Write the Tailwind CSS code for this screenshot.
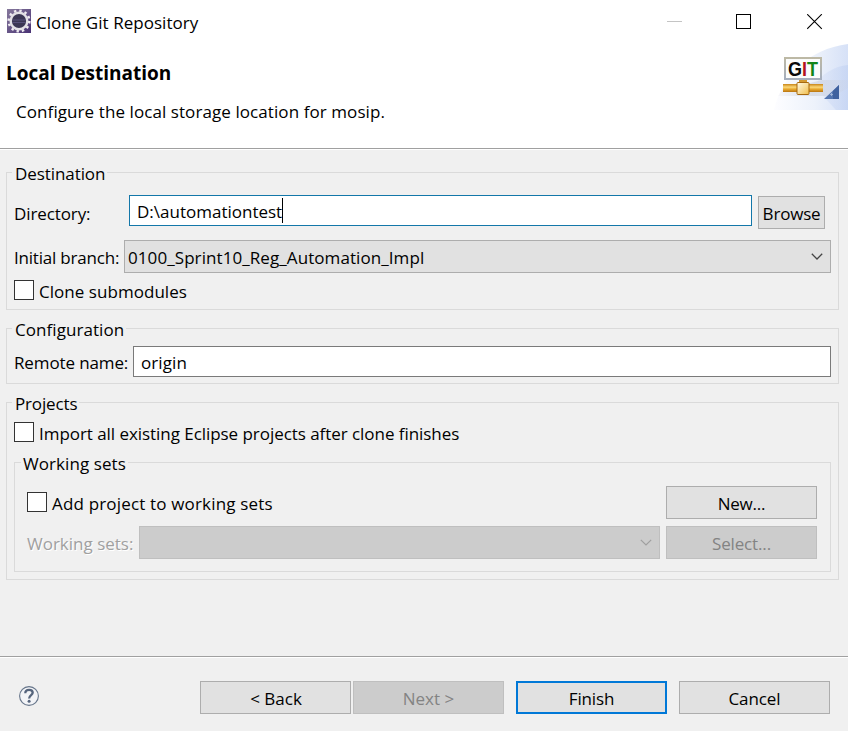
<!DOCTYPE html>
<html lang="en">
<head>
<meta charset="utf-8">
<title>Clone Git Repository</title>
<script src="https://cdn.jsdelivr.net/npm/@tailwindcss/browser@4"></script>
</head>
<body>
<div class="flex h-[731px] w-[848px] flex-col overflow-hidden bg-[#f0f0f0] font-['Open_Sans','Noto_Sans',sans-serif] text-[17px] leading-6 whitespace-nowrap text-black">

  <!-- Title bar and banner -->
  <header class="flex h-[150px] shrink-0 flex-col border-b border-white bg-white">
    <div class="flex h-11 items-start">
      <svg class="mt-[9px] ml-[7px] size-6" viewBox="0 0 24 24">
        <defs><linearGradient id="ec" x1="0" y1="0" x2="1" y2="1"><stop offset="0" stop-color="#86799c"/><stop offset="1" stop-color="#493274"/></linearGradient></defs>
        <rect width="24" height="24" fill="url(#ec)"/>
        <circle cx="12" cy="12" r="10.300" fill="none" stroke="#eeeaf0" stroke-width="2.600" stroke-dasharray="2.400 2.993"/>
        <circle cx="12" cy="12" r="8.300" fill="#3b3654" stroke="#e2e0e5" stroke-width="2.400"/>
        <path d="M5.500 11h13M5.500 13.500h13" stroke="#57507a" stroke-width="1"/>
      </svg>
      <h1 class="mt-[11px] ml-[5px] grow tracking-[0.04px]">Clone Git Repository</h1>
      <div class="mt-[14px] mr-[25px] flex">
        <svg class="h-4 w-4" viewBox="0 0 16 16"><path d="M0 7.500h15" stroke="#c4c4c4"/></svg>
        <svg class="ml-[53px] h-4 w-4" viewBox="0 0 16 16"><rect x=".5" y=".5" width="14" height="14" fill="none" stroke="#000"/></svg>
        <svg class="ml-[55px] h-4 w-4" viewBox="0 0 16 16"><path d="M.2.200l14.600 14.600M14.800.200L.2 14.800" stroke="#000" stroke-width="1.100"/></svg>
      </div>
    </div>
    <div class="flex h-[105px] border-b border-[#a0a0a0]">
      <div class="grow">
        <h2 class="mt-[17px] ml-[6px] text-[19px] font-bold tracking-[-0.02px]">Local Destination</h2>
        <p class="mt-[15px] ml-4 tracking-[0.08px]">Configure the local storage location for mosip.</p>
      </div>
      <svg class="h-[66px] w-[74px]" viewBox="0 0 74 66">
        <defs>
          <linearGradient id="bg1" x1="0" y1="0" x2="1" y2="0"><stop offset="0" stop-color="#fdfdff"/><stop offset=".55" stop-color="#edf2fb"/><stop offset="1" stop-color="#d6e1f7"/></linearGradient>
          <linearGradient id="bg2" x1="0" y1="0" x2="1" y2="0"><stop offset="0" stop-color="#dfe7f8"/><stop offset="1" stop-color="#bfd0f2"/></linearGradient>
          <linearGradient id="pipe" x1="0" y1="0" x2="0" y2="1"><stop offset="0" stop-color="#c8861a"/><stop offset=".4" stop-color="#fbd878"/><stop offset=".65" stop-color="#e8a82e"/><stop offset="1" stop-color="#b97510"/></linearGradient>
          <linearGradient id="box" x1="0" y1="0" x2="1" y2="1"><stop offset="0" stop-color="#fffbe8"/><stop offset="1" stop-color="#f0bd4a"/></linearGradient>
          <linearGradient id="frame" x1="0" y1="0" x2="0" y2="1"><stop offset="0" stop-color="#bdb9a5"/><stop offset="1" stop-color="#a5aebd"/></linearGradient>
          <linearGradient id="shade" x1="0" y1="0" x2="1" y2="0"><stop offset="0" stop-color="#d3d6de" stop-opacity=".2"/><stop offset=".5" stop-color="#cdd1da"/><stop offset="1" stop-color="#c9d0e0" stop-opacity=".3"/></linearGradient>
        </defs>
        <path d="M0 66C8 32 34 5 74 0V66Z" fill="url(#bg1)"/>
        <path d="M40 42C48 30 60 22 74 21V66H62Z" fill="url(#bg2)" opacity=".6"/>
        <path d="M8 46L48 36H74V44L60 52H4Z" fill="url(#shade)" opacity=".65"/>
        <rect x="11" y="14" width="36" height="21" fill="#fbfcfb" stroke="url(#frame)" stroke-width="2"/>
        <text x="14" y="31.500" font-family="Liberation Sans" font-weight="700" font-size="20" textLength="30" lengthAdjust="spacingAndGlyphs"><tspan fill="#080808">G</tspan><tspan fill="#b5121f">I</tspan><tspan fill="#128518">T</tspan></text>
        <rect x="25" y="36" width="8" height="4" fill="#d49a31"/>
        <rect x="9" y="40" width="40" height="8" fill="url(#pipe)"/>
        <rect x="23" y="38.500" width="12" height="12" rx="1" fill="url(#box)" stroke="#a7680f"/>
        <path d="M65 41V55H50Z" fill="#5375b0"/>
        <path d="M65 41V55H59V47Z" fill="#40629f"/>
        <path d="M57.500 49v3M56 50.500h3" stroke="#a9bddc" stroke-width=".8"/>
      </svg>
    </div>
  </header>

  <main class="flex grow flex-col pr-[9px] pl-[6px]">
    <!-- Destination -->
    <section class="mt-[22px] h-[138px] border border-[#dadada] pr-[7px] pl-[7px]">
      <h3 class="mt-[-11px] ml-[-2px] w-fit bg-[#f0f0f0] pr-[2px] pl-[3px] tracking-[-0.08px]">Destination</h3>
      <div class="mt-[9px] flex h-[34px]">
        <label class="mt-[7px] w-[115px] tracking-[-0.1px]">Directory:</label>
        <div class="flex h-[31px] w-[623px] border border-[#1377a9] bg-white pt-[4px] pl-[7px]">D:\automationtest<span class="mt-[-2px] h-[25px] w-px bg-black"></span></div>
        <button class="mt-px ml-[6px] h-[33px] w-[67px] border border-[#adadad] bg-[#e1e1e1] pt-[2px] tracking-[-0.2px]">Browse</button>
      </div>
      <div class="mt-[11px] flex h-[33px]">
        <label class="mt-[6px] w-[110px] tracking-[-0.2px]">Initial branch:</label>
        <div class="flex grow items-center justify-between border border-[#adadad] bg-[#e1e1e1] pr-[7px] pl-[3px]">
          <span class="pt-[3px] tracking-[0.08px]">0100_Sprint10_Reg_Automation_Impl</span>
          <svg class="h-[7px] w-3" viewBox="0 0 12 7" fill="none" stroke="#444" stroke-width="1.300"><path d="M.8.800L6 6l5.200-5.200"/></svg>
        </div>
      </div>
      <label class="mt-[6px] flex items-start gap-[5px]"><span class="mt-px size-5 border border-[#333] bg-white"></span><span class="mt-px tracking-[0.04px]">Clone submodules</span></label>
    </section>

    <!-- Configuration -->
    <section class="mt-[18px] h-[56px] border border-[#dadada] px-[7px]">
      <h3 class="mt-[-11px] ml-[-2px] w-fit bg-[#f0f0f0] pr-[2px] pl-[3px] tracking-[0.06px]">Configuration</h3>
      <div class="mt-[4px] flex h-[31px]">
        <label class="mt-[5px] w-[119px] tracking-[-0.12px]">Remote name:</label>
        <div class="grow border border-[#7a7a7a] bg-white pt-[4px] pl-[7px] tracking-[0.1px]">origin</div>
      </div>
    </section>

    <!-- Projects -->
    <section class="mt-[18px] h-[178px] border border-[#dadada] px-[7px]">
      <h3 class="mt-[-11px] ml-[-2px] w-fit bg-[#f0f0f0] pr-[2px] pl-[3px] tracking-[-0.15px]">Projects</h3>
      <label class="mt-[5px] flex h-6 items-start gap-[5px]"><span class="mt-px size-5 border border-[#333] bg-white"></span><span class="mt-px tracking-[-0.05px]">Import all existing Eclipse projects after clone finishes</span></label>
      <section class="mt-[17px] h-[110px] border border-[#dadada] pr-[13px] pl-3">
        <h3 class="mt-[-11px] ml-[-6px] w-fit bg-[#f0f0f0] px-[2px] tracking-[0.08px]">Working sets</h3>
        <div class="mt-[10px] flex h-[33px] justify-between">
          <label class="mt-[5px] flex items-start gap-[5px]"><span class="mt-px size-5 border border-[#333] bg-white"></span><span class="mt-px tracking-[0.17px]">Add project to working sets</span></label>
          <button class="w-[151px] border border-[#adadad] bg-[#e1e1e1] pt-[2px] tracking-[-0.2px]">New...</button>
        </div>
        <div class="mt-[7px] flex h-[33px]">
          <span class="mt-[6px] w-[112px] text-[#a0a0a0] [text-shadow:1px_1px_0_#fff]">Working sets:</span>
          <div class="flex grow items-center justify-end border border-[#bfbfbf] bg-[#cccccc] pr-[7px]">
            <svg class="h-[7px] w-3" viewBox="0 0 12 7" fill="none" stroke="#9f9f9f" stroke-width="1.200"><path d="M.8.800L6 6l5.200-5.200"/></svg>
          </div>
          <button class="ml-[6px] w-[151px] border border-[#bfbfbf] bg-[#cccccc] pt-[2px] tracking-[-0.15px] text-[#838383]">Select...</button>
        </div>
      </section>
    </section>
  </main>

  <!-- Wizard buttons -->
  <footer class="flex h-[75px] shrink-0 border-t border-[#a0a0a0]">
    <div class="flex grow border-t border-white">
      <svg class="mt-[28px] ml-[19px] size-5" viewBox="0 0 20 20">
        <circle cx="10" cy="10" r="9.400" fill="#f3f4f7" stroke="#66758a" stroke-width="1.100"/>
        <path d="M6.300 7.300C6.300 5 8 3.900 10.100 3.900S13.700 5 13.700 6.800C13.700 9.100 10.100 9.300 10.100 12.600" fill="none" stroke="#56657d" stroke-width="2.300"/>
        <circle cx="10.100" cy="15.300" r="1.500" fill="#56657d"/>
      </svg>
      <div class="mt-[23px] ml-[161px] flex h-[33px]">
        <button class="w-[151px] border border-[#adadad] bg-[#e1e1e1] pt-[2px] pl-px">&lt; Back</button>
        <button class="ml-[2px] w-[151px] border border-[#bfbfbf] bg-[#cccccc] pt-[2px] text-[#838383]">Next &gt;</button>
        <button class="ml-3 w-[151px] border-2 border-[#0078d7] bg-[#e1e1e1] pt-[2px] tracking-[-0.15px]">Finish</button>
        <button class="ml-3 w-[151px] border border-[#adadad] bg-[#e1e1e1] pt-[2px] tracking-[-0.1px]">Cancel</button>
      </div>
    </div>
  </footer>
</div>
</body>
</html>
